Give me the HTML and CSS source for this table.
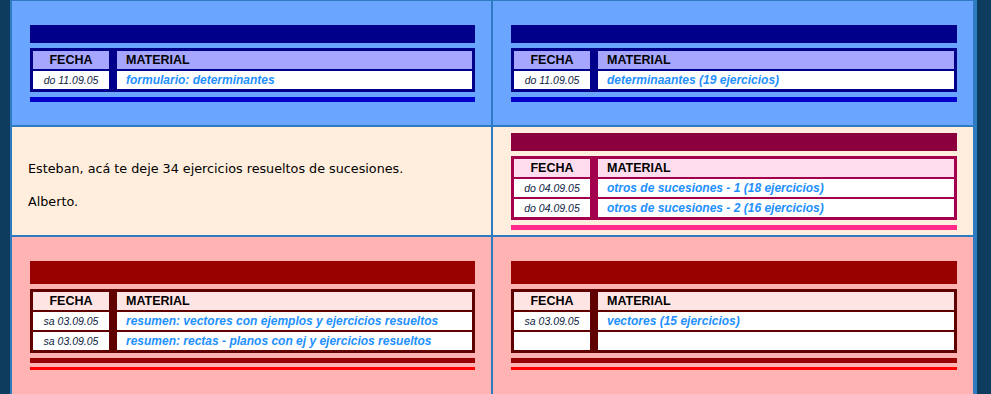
FILE: index.html
```html
<!DOCTYPE html>
<html lang="es">
<head>
    <meta charset="UTF-8">
    <title>Material de estudio</title>
    <link rel="stylesheet" href="styles.css">
</head>
<body>
    <div class="board">

        <!-- fila 1 -->
        <div class="cell cell-blue">
            <div class="block">
                <div class="bar"></div>
                <div class="materials">
                    <div class="th fecha">FECHA</div>
                    <div class="th">MATERIAL</div>
                    <div class="td fecha">do 11.09.05</div>
                    <div class="td"><a href="#">formulario: determinantes</a></div>
                </div>
                <div class="rule"></div>
            </div>
        </div>
        <div class="cell cell-blue">
            <div class="block">
                <div class="bar"></div>
                <div class="materials">
                    <div class="th fecha">FECHA</div>
                    <div class="th">MATERIAL</div>
                    <div class="td fecha">do 11.09.05</div>
                    <div class="td"><a href="#">determinaantes (19 ejercicios)</a></div>
                </div>
                <div class="rule"></div>
            </div>
        </div>

        <!-- fila 2 -->
        <div class="cell cell-cream">
            <p class="note">Esteban, acá te deje 34 ejercicios resueltos de sucesiones.<br><br>Alberto.</p>
        </div>
        <div class="cell cell-cream">
            <div class="block">
                <div class="bar"></div>
                <div class="materials">
                    <div class="th fecha">FECHA</div>
                    <div class="th">MATERIAL</div>
                    <div class="td fecha">do 04.09.05</div>
                    <div class="td"><a href="#">otros de sucesiones - 1 (18 ejercicios)</a></div>
                    <div class="td fecha">do 04.09.05</div>
                    <div class="td"><a href="#">otros de sucesiones - 2 (16 ejercicios)</a></div>
                </div>
                <div class="rule"></div>
            </div>
        </div>

        <!-- fila 3 -->
        <div class="cell cell-rose">
            <div class="block">
                <div class="bar"></div>
                <div class="materials">
                    <div class="th fecha">FECHA</div>
                    <div class="th">MATERIAL</div>
                    <div class="td fecha">sa 03.09.05</div>
                    <div class="td"><a href="#">resumen: vectores con ejemplos y ejercicios resueltos</a></div>
                    <div class="td fecha">sa 03.09.05</div>
                    <div class="td"><a href="#">resumen: rectas - planos con ej y ejercicios resueltos</a></div>
                </div>
                <div class="rule"></div>
                <div class="rule-thin"></div>
            </div>
        </div>
        <div class="cell cell-rose">
            <div class="block">
                <div class="bar"></div>
                <div class="materials">
                    <div class="th fecha">FECHA</div>
                    <div class="th">MATERIAL</div>
                    <div class="td fecha">sa 03.09.05</div>
                    <div class="td"><a href="#">vectores (15 ejercicios)</a></div>
                    <div class="td fecha"></div>
                    <div class="td"></div>
                </div>
                <div class="rule"></div>
                <div class="rule-thin"></div>
            </div>
        </div>

    </div>
</body>
</html>
```

FILE: styles.css
```css
body {
    margin: 0;
    background-color: #0e3c5e;
    font-family: "Liberation Sans", Arial, sans-serif;
}
.board {
    margin-left: 10px;
    width: 961px;
    padding: 1px 4px 0 2px;
    background-color: #2f7bc2;
    display: grid;
    grid-template-columns: 479px 480px;
    grid-template-rows: 124px 108px 157px;
    gap: 2px;
}
.cell {
    display: flex;
    flex-direction: column;
    justify-content: center;
    padding: 0 16px;
}
.block {
    margin-left: 2px;
    display: flex;
    flex-direction: column;
}
.bar {
    height: 18px;
    margin-bottom: 5px;
}
.materials {
    display: grid;
    grid-template-columns: 76px 1fr;
    grid-auto-rows: 18px;
    column-gap: 8px;
    row-gap: 2px;
    padding: 3px;
    margin-bottom: 5px;
}
.th, .td {
    display: flex;
    align-items: center;
    padding-left: 9px;
    white-space: nowrap;
    overflow: hidden;
}
.th {
    font-size: 12.5px;
    font-weight: bold;
    color: #000;
}
.td {
    background-color: #fff;
}
.fecha {
    justify-content: center;
    padding-left: 0;
}
.td.fecha {
    font-size: 10.5px;
    font-style: italic;
    color: #0c2242;
}
.td a {
    font-size: 12px;
    font-weight: bold;
    font-style: italic;
    color: #1e90ff;
    text-decoration: none;
}
.rule {
    height: 5px;
}
.rule-thin {
    height: 3px;
    margin-top: 4px;
    background-color: #ff0000;
}

/* azul */
.cell-blue {
    background-color: #6aa6ff;
}
.cell-blue .bar {
    background-color: #00008b;
}
.cell-blue .materials {
    background-color: #00008b;
}
.cell-blue .th {
    background-color: #a6a6ff;
}
.cell-blue .rule {
    background-color: #0000cd;
}

/* crema */
.cell-cream {
    background-color: #ffeedd;
}
.cell-cream .bar {
    background-color: #8b003c;
}
.cell-cream .materials {
    background-color: #a3004e;
}
.cell-cream .th {
    background-color: #ffddee;
}
.cell-cream .rule {
    background-color: #ff2a8a;
}
.note {
    margin: 0;
    padding-top: 9px;
    font-family: "DejaVu Sans", Verdana, sans-serif;
    font-size: 12.75px;
    line-height: 16.5px;
    color: #000;
}

/* rosa */
.cell-rose {
    background-color: #ffb3b3;
}
.cell-rose .bar {
    height: 23px;
    background-color: #990000;
}
.cell-rose .materials {
    background-color: #600000;
}
.cell-rose .th {
    background-color: #ffe4e4;
}
.cell-rose .rule {
    background-color: #990000;
}
```
